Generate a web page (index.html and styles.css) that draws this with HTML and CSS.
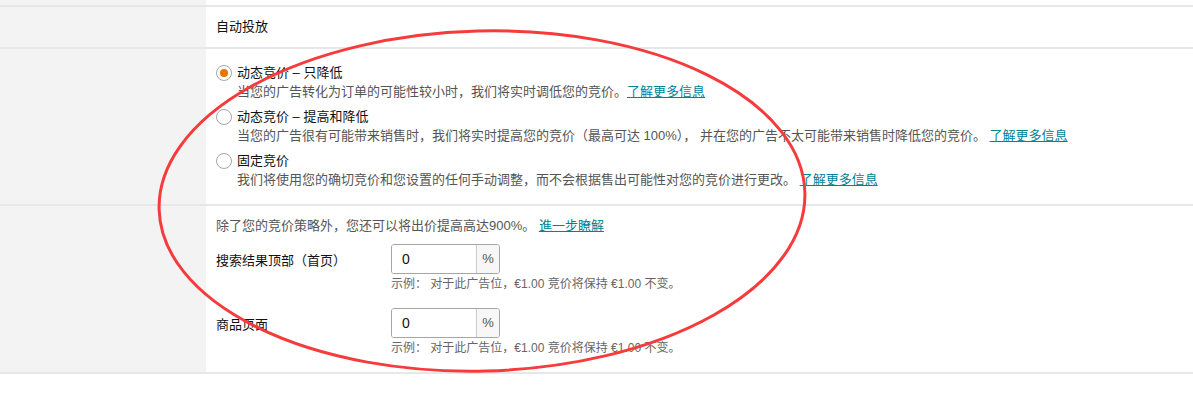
FILE: index.html
```html
<!DOCTYPE html>
<html lang="zh-CN">
<head>
  <meta charset="UTF-8" />
  <meta name="viewport" content="width=device-width, initial-scale=1.0"/>
  <title>竞价策略</title>
  <link rel="stylesheet" href="styles.css">
</head>
<body>
  <div class="settings">
    <div class="row row-top">
      <div class="side"></div>
      <div class="cell"></div>
    </div>

    <div class="row row-title">
      <div class="side"></div>
      <div class="cell">自动投放</div>
    </div>

    <div class="row row-bids">
      <div class="side"></div>
      <div class="cell">
        <label class="option">
          <span class="radio checked"></span>
          <span class="option-label">动态竞价 – 只降低</span>
          <span class="option-desc">当您的广告转化为订单的可能性较小时，我们将实时调低您的竞价。<a href="#">了解更多信息</a></span>
        </label>
        <label class="option">
          <span class="radio"></span>
          <span class="option-label">动态竞价 – 提高和降低</span>
          <span class="option-desc">当您的广告很有可能带来销售时，我们将实时提高您的竞价（最高可达 100%）， 并在您的广告不太可能带来销售时降低您的竞价。 <a href="#">了解更多信息</a></span>
        </label>
        <label class="option">
          <span class="radio"></span>
          <span class="option-label">固定竞价</span>
          <span class="option-desc">我们将使用您的确切竞价和您设置的任何手动调整，而不会根据售出可能性对您的竞价进行更改。 <a href="#">了解更多信息</a></span>
        </label>
      </div>
    </div>

    <div class="row row-placement">
      <div class="side"></div>
      <div class="cell">
        <p class="intro">除了您的竞价策略外，您还可以将出价提高高达900%。 <a href="#">進一步瞭解</a></p>

        <div class="field">
          <span class="field-label">搜索结果顶部（首页）</span>
          <div class="input-group">
            <input type="text" value="0" />
            <span class="addon">%</span>
          </div>
          <span class="hint">示例： 对于此广告位，€1.00 竞价将保持 €1.00 不变。</span>
        </div>

        <div class="field">
          <span class="field-label">商品页面</span>
          <div class="input-group">
            <input type="text" value="0" />
            <span class="addon">%</span>
          </div>
          <span class="hint">示例： 对于此广告位，€1.00 竞价将保持 €1.00 不变。</span>
        </div>
      </div>
    </div>
  </div>

  <!-- red annotation drawn over the screenshot -->
  <svg class="markup" width="1193" height="411" viewBox="0 0 1193 411">
    <ellipse cx="482" cy="201" rx="323" ry="170" transform="rotate(-1.5 482 201)" />
  </svg>
</body>
</html>
```

FILE: styles.css
```css
body {
  margin: 0;
  font-family: "Liberation Sans", "Noto Sans CJK SC", Arial, sans-serif;
  font-size: 13px;
  color: #111;
  background: #fff;
}
a {
  color: #008296;
  text-decoration: underline;
}
.row {
  display: grid;
  grid-template-columns: 206px 1fr;
  border-bottom: 2px solid #e7e7e7;
}
.side {
  background: #f3f3f3;
}
.cell {
  padding-left: 10px;
}
.row-top {
  height: 5px;
}
.row-title .cell {
  height: 40px;
  line-height: 40px;
}
.row-bids .cell {
  padding-top: 14px;
  padding-bottom: 15px;
}
.option {
  display: grid;
  grid-template-columns: 21px 1fr;
  line-height: 19px;
  margin-bottom: 6px;
}
.option:last-child {
  margin-bottom: 0;
}
.radio {
  grid-row: 1;
  grid-column: 1;
  width: 14px;
  height: 14px;
  margin-top: 2px;
  border: 1px solid #a6a6a6;
  border-radius: 50%;
  background: #fff;
  position: relative;
}
.radio.checked::after {
  content: "";
  position: absolute;
  left: 3px;
  top: 3px;
  width: 8px;
  height: 8px;
  border-radius: 50%;
  background: #e77600;
}
.option-label {
  grid-column: 2;
}
.option-desc {
  grid-column: 2;
  color: #555;
}
.row-placement .cell {
  padding-top: 10px;
  padding-bottom: 14px;
}
.intro {
  margin: 0 0 9px;
  line-height: 19px;
  color: #555;
}
.field {
  display: grid;
  grid-template-columns: 175px auto;
  justify-content: start;
  margin-bottom: 14px;
}
.field:last-child {
  margin-bottom: 0;
}
.field-label {
  align-self: center;
}
.input-group {
  display: flex;
  width: 107px;
  height: 28px;
  border: 1px solid #a6a6a6;
  border-radius: 3px;
  overflow: hidden;
}
.input-group input {
  width: 74px;
  border: none;
  padding: 0 0 0 10px;
  margin: 0;
  font-family: "Liberation Sans", Arial, sans-serif;
  font-size: 14px;
  color: #111;
  outline: none;
}
.addon {
  flex: 1;
  border-left: 1px solid #c9c9c9;
  background: #f7f7f7;
  color: #555;
  text-align: center;
  line-height: 28px;
}
.hint {
  grid-column: 2;
  margin-top: 1px;
  font-size: 12px;
  line-height: 19px;
  color: #666;
}
.markup {
  position: absolute;
  left: 0;
  top: 0;
  pointer-events: none;
}
.markup ellipse {
  fill: none;
  stroke: #f53b3b;
  stroke-width: 3;
}
```
